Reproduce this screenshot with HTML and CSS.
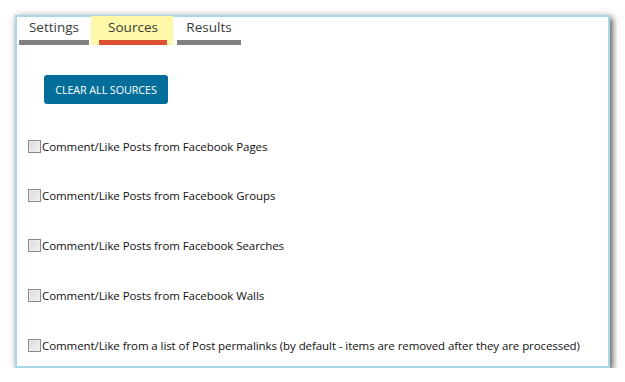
FILE: index.html
```html
<!DOCTYPE html>
<html>
<head>
<meta charset="utf-8">
<link rel="stylesheet" href="styles.css">
</head>
<body>
<div class="window">
  <div class="tabs">
    <div class="tab tab-plain tab-settings"><span class="tab-label">Settings</span></div>
    <div class="tab tab-active"><span class="tab-label">Sources</span></div>
    <div class="tab tab-plain tab-results"><span class="tab-label">Results</span></div>
  </div>
  <div class="content">
    <button class="btn-clear">CLEAR ALL SOURCES</button>
    <ul class="sources">
      <li class="source"><label><input type="checkbox" class="chk"><span>Comment/Like Posts from Facebook Pages</span></label></li>
      <li class="source"><label><input type="checkbox" class="chk"><span>Comment/Like Posts from Facebook Groups</span></label></li>
      <li class="source"><label><input type="checkbox" class="chk"><span>Comment/Like Posts from Facebook Searches</span></label></li>
      <li class="source"><label><input type="checkbox" class="chk"><span>Comment/Like Posts from Facebook Walls</span></label></li>
      <li class="source"><label><input type="checkbox" class="chk"><span>Comment/Like from a list of Post permalinks (by default - items are removed after they are processed)</span></label></li>
    </ul>
  </div>
</div>
</body>
</html>
```

FILE: styles.css
```css
html, body {
  margin: 0;
  padding: 0;
  background: #ffffff;
}
body {
  padding: 15px 0 0 15px;
  font-family: "Open Sans", "Noto Sans", sans-serif;
  color: #222;
}
.window {
  box-sizing: border-box;
  width: 595px;
  height: 353px;
  background: #fff;
  border: 2px solid #a9d9e8;
  box-shadow: 3px 3px 6px rgba(0,0,0,0.55), 0 0 8px rgba(0,0,0,0.18);
}
.tabs {
  display: flex;
  padding-left: 2px;
  height: 28px;
}
.tab {
  display: flex;
  font-size: 13.5px;
  color: #3a3a3a;
}
.tab-label {
  display: block;
  box-sizing: border-box;
  height: 28px;
  padding-top: 1px;
  border-bottom: 5px solid #808080;
  text-align: center;
}
.tab-settings .tab-label { width: 70px; }
.tab-results .tab-label { width: 64px; }
.tab-active {
  margin-left: 2px;
  margin-right: 4px;
  padding: 0 6px 0 8px;
  background: #fdf9a8;
  margin-top: -1px;
}
.tab-active .tab-label {
  width: 68px;
  height: 29px;
  padding-top: 2px;
  border-bottom-color: #dc5032;
}
.content {
  padding: 30px 0 0 27px;
}
.btn-clear {
  display: block;
  width: 124px;
  height: 29px;
  padding: 0;
  border: none;
  border-radius: 3px;
  background: #026e99;
  color: #fff;
  font-family: "Open Sans", "Noto Sans", sans-serif;
  font-size: 10.8px;
  font-weight: 500;
  letter-spacing: -0.1px;
}
.sources {
  list-style: none;
  margin: 0 0 0 -16px;
  padding: 0;
}
.source {
  height: 49.8px;
}
.source:first-child {
  margin-top: 35px;
}
.source label {
  display: flex;
  align-items: center;
  font-size: 11.5px;
  color: #111;
  letter-spacing: -0.08px;
  height: 14px;
}
.chk {
  appearance: none;
  -webkit-appearance: none;
  box-sizing: border-box;
  width: 13px;
  height: 13px;
  margin: 0 1px 0 0;
  border: 1px solid #8a8a8a;
  background: linear-gradient(135deg, #d8d8d8, #f4f4f4);
  box-shadow: inset 0 0 0 1px #ececec;
}
```
